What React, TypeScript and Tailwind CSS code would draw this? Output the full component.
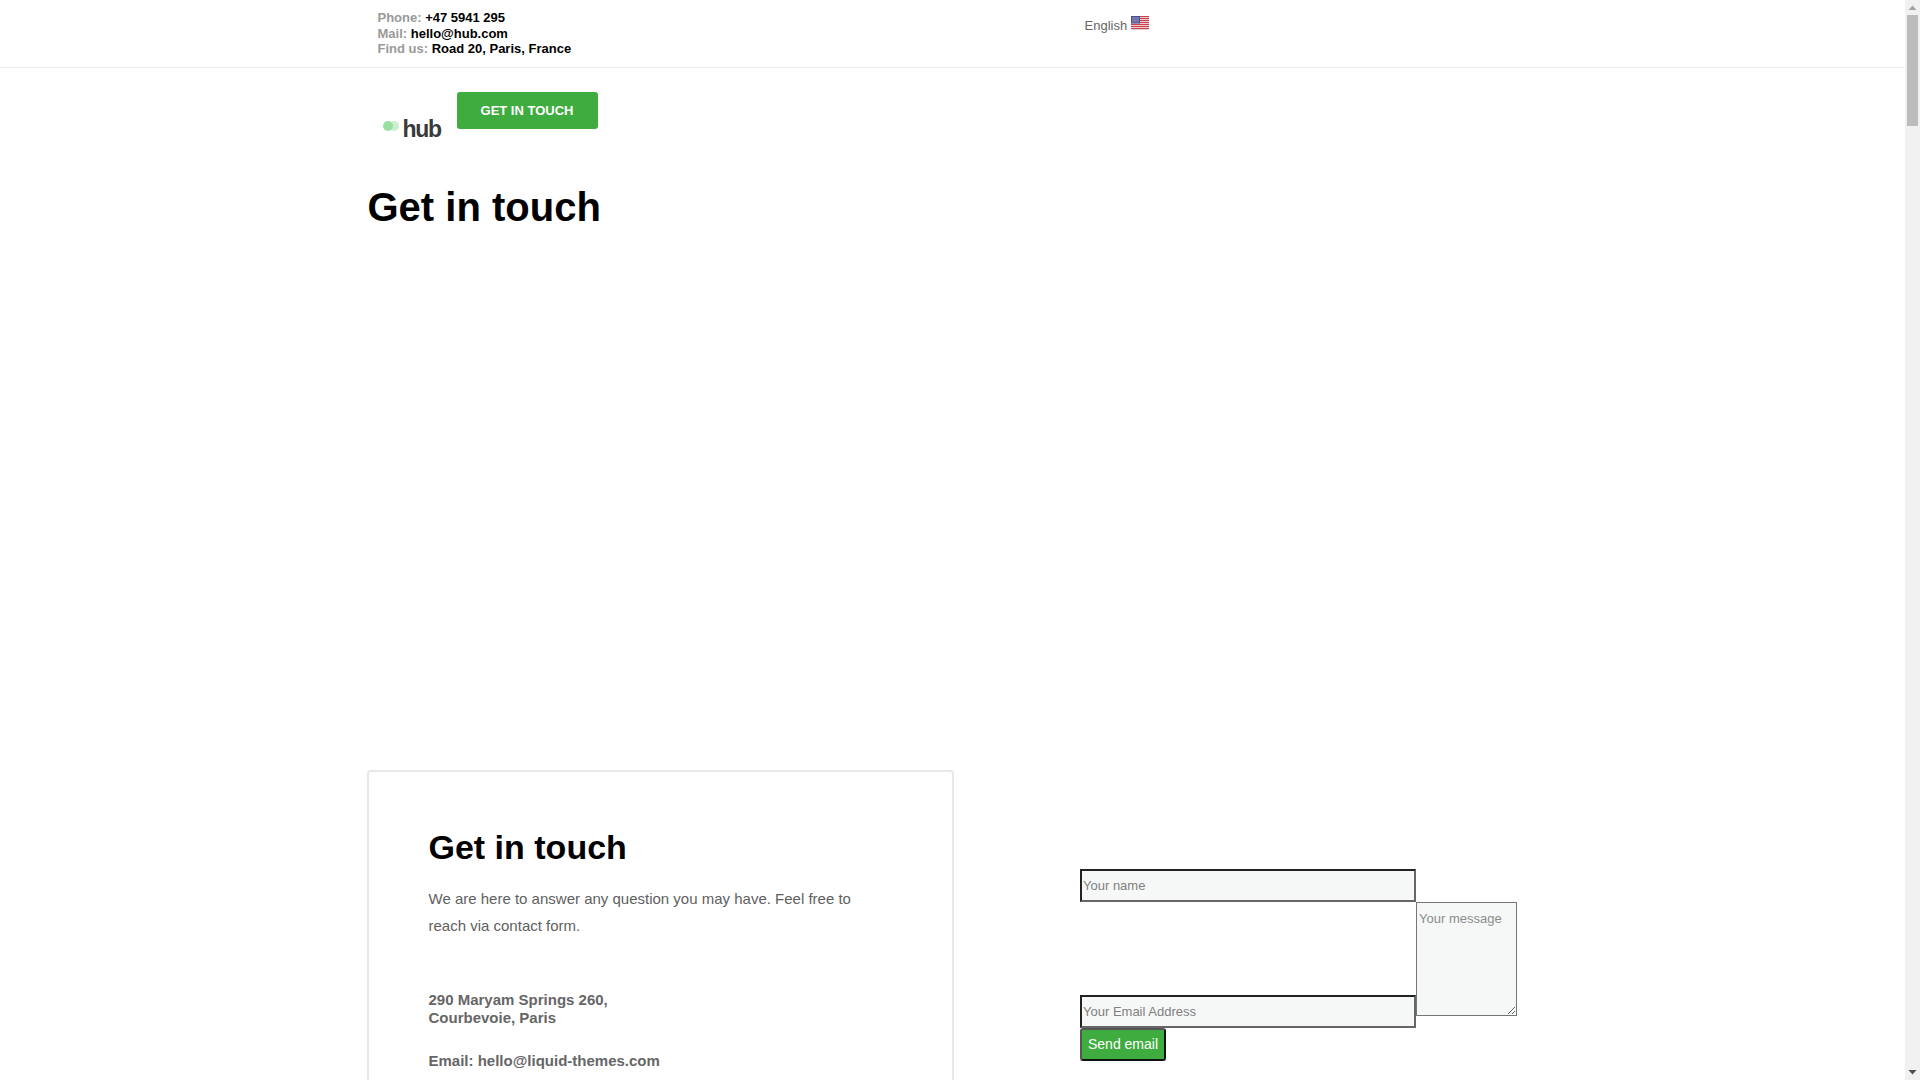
const font = { fontFamily: '"Liberation Sans", Arial, sans-serif' }

function UsFlag() {
  const stripes = [0, 2, 4, 6, 8, 10, 12]
  return (
    <svg width="18" height="14" viewBox="0 0 18 14" className="block">
      <rect width="18" height="14" fill="#f4dcdc" />
      {stripes.map(y => (
        <rect key={y} y={y} width="18" height="1.1" fill="#c9404f" />
      ))}
      <rect width="9" height="7.5" fill="#4a4f8f" />
      <rect x="1" y="1" width="7" height="5.5" fill="#8f92bd" opacity="0.6" />
    </svg>
  )
}

function TopBar() {
  return (
    <div className="h-[68px] border-b border-[#eeeeee]">
      <div className="w-[1170px] mx-auto flex">
        <div className="w-[717px] pl-[10px] pt-[10px] text-[13px] leading-[15.5px] font-bold text-[#999999]">
          <p>Phone: <span className="text-black">+47 5941 295</span></p>
          <p>Mail: <span className="text-black">hello@hub.com</span></p>
          <p>Find us: <span className="text-black">Road 20, Paris, France</span></p>
        </div>
        <div className="flex items-start gap-[4px] pt-[16px] text-[13px] leading-[18px] text-[#666666]">
          <span className="pt-[1px]">English</span>
          <UsFlag />
        </div>
      </div>
    </div>
  )
}

function NavBar() {
  return (
    <div className="w-[1170px] mx-auto flex items-start pt-[24px] pl-[15px] h-[116px]">
      <div className="flex items-start w-[74px] pt-[25px]">
        <div className="relative w-[16px] h-[10px] mt-[4px]">
          <span className="absolute left-0 top-0 w-[10px] h-[10px] rounded-full bg-[#98e0a0]" />
          <span className="absolute left-[6px] top-0 w-[10px] h-[10px] rounded-full bg-[#98e0a0]/50" />
        </div>
        <span className="ml-[4px] text-[23px] leading-[24px] font-bold tracking-[-1.3px] text-[#3a3a3a]">hub</span>
      </div>
      <a className="w-[141px] h-[37px] flex items-center justify-center rounded-[3px] bg-[#3fac3f] text-white text-[13px] font-bold uppercase">
        Get in touch
      </a>
    </div>
  )
}

function ContactCard() {
  return (
    <div className="w-[586.5px] -ml-[0.5px] h-[500px] shrink-0 border-2 border-[#e8e8e8] rounded-[4px] pl-[59.5px] pr-[60px] pt-[56px]">
      <h2 className="text-[34px] leading-[38px] font-bold text-black">Get in touch</h2>
      <p className="mt-[19px] text-[15px] leading-[27px] text-[#5f5f5f]">
        We are here to answer any question you may have. Feel free to reach via contact form.
      </p>
      <p className="mt-[52px] text-[15px] leading-[18px] font-bold text-[#666666]">
        290 Maryam Springs 260,<br />Courbevoie, Paris
      </p>
      <p className="mt-[25px] text-[15px] leading-[18px] font-bold text-[#666666]">
        Email: hello@liquid-themes.com
      </p>
    </div>
  )
}

function ContactForm() {
  return (
    <form className="flex items-start ml-[126.5px] pt-[99px]">
      <div className="w-[336px] flex flex-col">
        <input
          placeholder="Your name"
          className="h-[33px] border-2 border-t-[#222222] border-l-[#222222] border-r-[#666666] border-b-[#666666] bg-[#f6f8f7] px-[1px] text-[13px] placeholder:text-[#808080] outline-none"
        />
        <input
          placeholder="Your Email Address"
          className="mt-[93px] h-[33px] border-2 border-t-[#222222] border-l-[#222222] border-r-[#666666] border-b-[#666666] bg-[#f6f8f7] px-[1px] text-[13px] placeholder:text-[#808080] outline-none"
        />
        <button
          type="button"
          className="w-[86px] h-[33px] border-2 border-t-[#555555] border-l-[#555555] border-r-[#111111] border-b-[#111111] rounded-[3px] bg-[#3fac3f] text-white text-[14px]"
        >
          Send email
        </button>
      </div>
      <textarea
        placeholder="Your message"
        className="w-[101px] h-[114px] mt-[33px] border border-[#767676] bg-[#f6f8f7] px-[2px] py-[8px] text-[13px] leading-[15px] placeholder:text-[#8c8c8c] outline-none"
      />
    </form>
  )
}

function Scrollbar() {
  return (
    <aside className="w-[15px] shrink-0 h-full bg-[#f1f1f1] flex flex-col items-center">
      <svg width="9" height="15" viewBox="0 0 9 15" className="shrink-0">
        <path d="M4.5 5.5 L8.5 10 H0.5 Z" fill="#a3a3a3" />
      </svg>
      <div className="w-[11px] h-[111px] shrink-0 bg-[#bcbcbc]" />
      <div className="flex-1" />
      <svg width="9" height="15" viewBox="0 0 9 15" className="shrink-0">
        <path d="M0.5 5 H8.5 L4.5 9.5 Z" fill="#505050" />
      </svg>
    </aside>
  )
}

export default function App() {
  return (
    <div className="h-screen flex overflow-hidden bg-white" style={font}>
      <main className="flex-1 min-w-0">
        <TopBar />
        <NavBar />
        <div className="w-[1170px] mx-auto">
          <h1 className="text-[40px] leading-[46px] font-bold text-black">Get in touch</h1>
          <div className="flex mt-[540px]">
            <ContactCard />
            <ContactForm />
          </div>
        </div>
      </main>
      <Scrollbar />
    </div>
  )
}
